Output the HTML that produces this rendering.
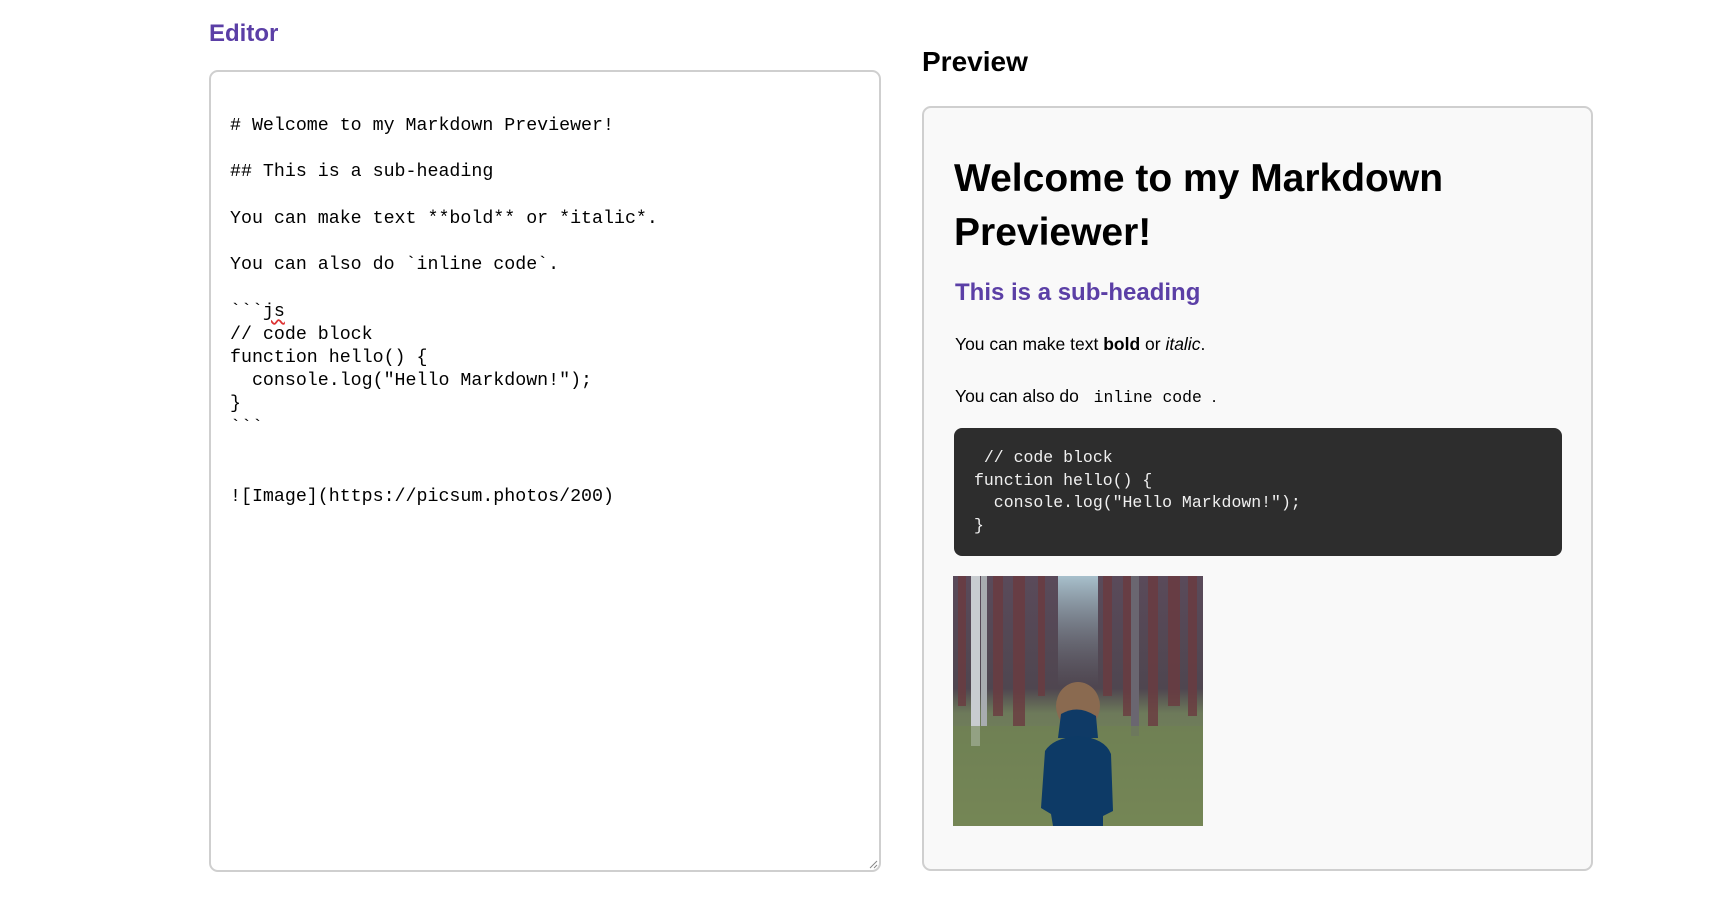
<!DOCTYPE html>
<html><head><meta charset="utf-8"><style>
*{margin:0;padding:0;box-sizing:border-box}
body{width:1727px;height:897px;background:#fff;position:relative;overflow:hidden;font-family:"Liberation Sans",sans-serif;color:#000}
.a{position:absolute;white-space:pre}
.mono{font-family:"Liberation Mono",monospace}
</style></head><body>
<div class="a" style="left:209px;top:18px;font-size:24px;font-weight:bold;color:#5b3fa6;line-height:32px">Editor</div>
<div class="a" style="left:209px;top:70px;width:672px;height:802px;border:2px solid #cfcfcf;border-radius:9px;background:#fff"></div>
<div class="a mono" style="left:230px;top:115px;font-size:18.3px;line-height:23.2px;color:#000"># Welcome to my Markdown Previewer!

## This is a sub-heading

You can make text **bold** or *italic*.

You can also do &#96;inline code&#96;.

&#96;&#96;&#96;<span style="text-decoration:underline wavy #d33;text-underline-offset:3px">js</span>
// code block
function hello() {
  console.log("Hello Markdown!");
}
&#96;&#96;&#96;


![Image](https://picsum.photos/200)</div>
<svg class="a" style="left:868px;top:859px" width="10" height="10"><path d="M9 2L2 9M9 6L6 9" stroke="#888" stroke-width="1"/></svg>

<div class="a" style="left:922px;top:44px;font-size:28px;font-weight:bold;line-height:36px">Preview</div>
<div class="a" style="left:922px;top:106px;width:671px;height:765px;border:2px solid #cfcfcf;border-radius:9px;background:#f9f9f9"></div>
<div class="a" style="left:954px;top:152px;font-size:39px;font-weight:bold;line-height:54px">Welcome to my Markdown
Previewer!</div>
<div class="a" style="left:955px;top:278px;font-size:24px;font-weight:bold;color:#5b3fa6;line-height:30px">This is a sub-heading</div>
<div class="a" style="left:955px;top:332px;font-size:17.5px;line-height:24px">You can make text <b>bold</b> or <i>italic</i>.</div>
<div class="a" style="left:955px;top:384px;font-size:17.5px;line-height:24px">You can also do <span class="mono" style="font-size:16.4px"> inline code </span>.</div>
<div class="a" style="left:954px;top:428px;width:608px;height:128px;background:#2d2d2d;border-radius:8px"></div>
<div class="a mono" style="left:974px;top:447px;font-size:16.5px;line-height:22.5px;color:#f0f0f0"> // code block
function hello() {
  console.log("Hello Markdown!");
}</div>
<svg class="a" style="left:953px;top:576px" width="250" height="250" viewBox="0 0 250 250">
<defs>
<linearGradient id="g" x1="0" y1="0" x2="0" y2="1"><stop offset="0" stop-color="#5a4a5a"/><stop offset="0.45" stop-color="#4f4650"/><stop offset="0.55" stop-color="#6d7a5a"/><stop offset="1" stop-color="#7d8a5e"/></linearGradient>
<linearGradient id="m" x1="0" y1="0" x2="0" y2="1"><stop offset="0" stop-color="#a8c0cc"/><stop offset="1" stop-color="#6a7a80" stop-opacity="0"/></linearGradient>
</defs>
<rect width="250" height="250" fill="url(#g)"/>
<rect x="105" y="0" width="40" height="110" fill="url(#m)"/>
<g fill="#6b3b40" opacity="0.8">
<rect x="5" y="0" width="8" height="130"/><rect x="40" y="0" width="10" height="140"/><rect x="60" y="0" width="12" height="150"/><rect x="85" y="0" width="7" height="120"/><rect x="150" y="0" width="9" height="120"/><rect x="170" y="0" width="12" height="140"/><rect x="195" y="0" width="10" height="150"/><rect x="215" y="0" width="12" height="130"/><rect x="235" y="0" width="9" height="140"/>
</g>
<rect x="178" y="0" width="8" height="160" fill="#6a6670"/>
<rect x="18" y="0" width="9" height="170" fill="#c8ccd0"/><rect x="28" y="0" width="6" height="150" fill="#a8acb0"/>
<rect x="0" y="150" width="250" height="100" fill="#6f8450" opacity="0.6"/>
<ellipse cx="125" cy="130" rx="22" ry="24" fill="#8a6a50"/>
<path d="M108 138 Q125 128 143 140 L145 162 L105 162 Z" fill="#0f3a66"/>
<path d="M92 175 Q100 162 125 160 Q152 162 158 178 L160 235 L150 240 L150 250 L100 250 L98 238 L88 232 Z" fill="#0d3a66"/>
</svg>
</body></html>
